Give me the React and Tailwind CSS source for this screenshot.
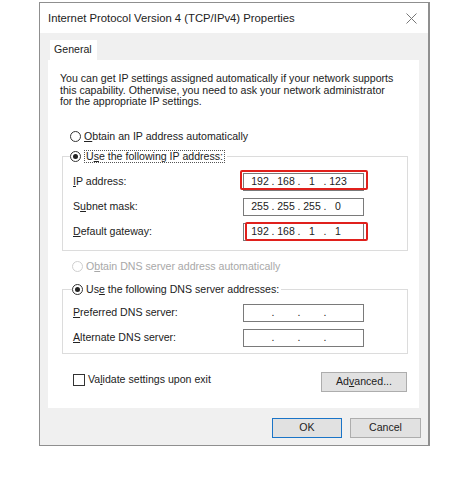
import React from 'react';

const Radio = ({ checked = false, disabled = false }) => (
  <span
    className={`w-[11px] h-[11px] rounded-full border bg-white flex items-center justify-center shrink-0 ${
      disabled ? 'border-[#cfcfcf]' : 'border-[#333333]'
    }`}
  >
    {checked && <span className="w-[5px] h-[5px] rounded-full bg-[#222222]" />}
  </span>
);

const IpField = ({ values = ['', '', '', ''] }) => (
  <div className="w-[121px] h-[18px] border border-[#7a7a7a] bg-white flex items-center pl-[5px] text-[10.5px] text-[#222]">
    {values.map((v, i) => (
      <React.Fragment key={i}>
        <span className="w-[22px] text-center">{v}</span>
        {i < 3 && <span className="w-[4px] text-center">.</span>}
      </React.Fragment>
    ))}
  </div>
);

const Row = ({ label, children }) => (
  <div className="flex items-center h-[18px] pl-[10px]">
    <span className="w-[170px]">{label}</span>
    {children}
  </div>
);

const App = () => {
  return (
    <div
      className="w-[465px] h-[479px] bg-white pt-[2px] pl-[39px] text-[#222222]"
      style={{ fontFamily: '"Liberation Sans", Arial, sans-serif' }}
    >
      <div className="w-[391px] h-[444px] border border-[#8f8f8f] border-r-2 flex flex-col bg-[#f0f0f0]">
        {/* title bar */}
        <div className="h-[30px] bg-white flex items-center justify-between pl-[8px] pr-[11px] shrink-0">
          <span className="text-[11.3px]">Internet Protocol Version 4 (TCP/IPv4) Properties</span>
          <svg width="11" height="11" viewBox="0 0 11 11">
            <path d="M0.5 0.5 L10.5 10.5 M10.5 0.5 L0.5 10.5" stroke="#777" strokeWidth="1" />
          </svg>
        </div>

        {/* tab strip + panel */}
        <div className="pl-[8px] pr-[9px] pt-[7px] text-[10.6px]">
          <div className="flex">
            <div className="ml-[2px] w-[47px] h-[20px] bg-white flex items-center pl-[4px]">General</div>
          </div>
          <div className="bg-white h-[348px] flex flex-col">
            <p className="pt-[13px] pl-[12px] leading-[11.5px] whitespace-nowrap">
              You can get IP settings assigned automatically if your network supports
              <br />
              this capability. Otherwise, you need to ask your network administrator
              <br />
              for the appropriate IP settings.
            </p>

            <div className="mt-[22px] pl-[22px] h-[14px] flex items-center gap-[3px]">
              <Radio />
              <span>
                <u>O</u>btain an IP address automatically
              </span>
            </div>

            <fieldset className="mt-[6px] ml-[14px] mr-[11px] border border-[#dcdcdc] pb-[9px]">
              <legend className="ml-[7px] h-[14px] flex items-center gap-[3px] pr-[2px] bg-white">
                <Radio checked />
                <span className="border border-dotted border-[#555] px-[1px] leading-[11px]">
                  U<u>s</u>e the following IP address:
                </span>
              </legend>
              <div className="pt-[9px] flex flex-col gap-[7px]">
                <Row label={<><u>I</u>P address:</>}>
                  <div className="relative">
                    <IpField values={['192', '168', '1', '123']} />
                    <div className="absolute left-[-3px] top-[-3px] w-[128px] h-[20px] border-2 border-[#e0201c] rounded-[2px]" />
                  </div>
                </Row>
                <Row label={<>S<u>u</u>bnet mask:</>}>
                  <IpField values={['255', '255', '255', '0']} />
                </Row>
                <Row label={<><u>D</u>efault gateway:</>}>
                  <div className="relative">
                    <IpField values={['192', '168', '1', '1']} />
                    <div className="absolute left-[2px] top-[-1px] w-[123px] h-[19px] border-2 border-[#e0201c] rounded-[2px]" />
                  </div>
                </Row>
              </div>
            </fieldset>

            <div className="mt-[9px] pl-[24px] h-[14px] flex items-center gap-[3px] text-[#a8a8a8]">
              <Radio disabled />
              <span>
                O<u>b</u>tain DNS server address automatically
              </span>
            </div>

            <fieldset className="mt-[9px] ml-[14px] mr-[11px] border border-[#dcdcdc] pb-[6px]">
              <legend className="ml-[9px] h-[14px] flex items-center gap-[3px] pr-[2px] bg-white">
                <Radio checked />
                <span>
                  Us<u>e</u> the following DNS server addresses:
                </span>
              </legend>
              <div className="pt-[7px] flex flex-col gap-[7px]">
                <Row label={<><u>P</u>referred DNS server:</>}>
                  <IpField />
                </Row>
                <Row label={<><u>A</u>lternate DNS server:</>}>
                  <IpField />
                </Row>
              </div>
            </fieldset>

            <div className="mt-[18px] pl-[25px] pr-[12px] flex items-start justify-between">
              <div className="mt-[1px] h-[14px] flex items-center gap-[3px]">
                <span className="w-[12px] h-[12px] border border-[#333] bg-white" />
                <span>
                  Va<u>l</u>idate settings upon exit
                </span>
              </div>
              <button className="w-[86px] h-[20px] bg-[#e1e1e1] border border-[#adadad]">
                Ad<u>v</u>anced...
              </button>
            </div>
          </div>
        </div>

        {/* dialog buttons */}
        <div className="mt-[10px] pr-[7px] flex justify-end gap-[8px] text-[10.6px]">
          <button className="w-[70px] h-[20px] bg-[#e1e1e1] border border-[#1a74c7]">OK</button>
          <button className="w-[71px] h-[20px] bg-[#e1e1e1] border border-[#adadad]">Cancel</button>
        </div>
      </div>
    </div>
  );
};

export default App;
